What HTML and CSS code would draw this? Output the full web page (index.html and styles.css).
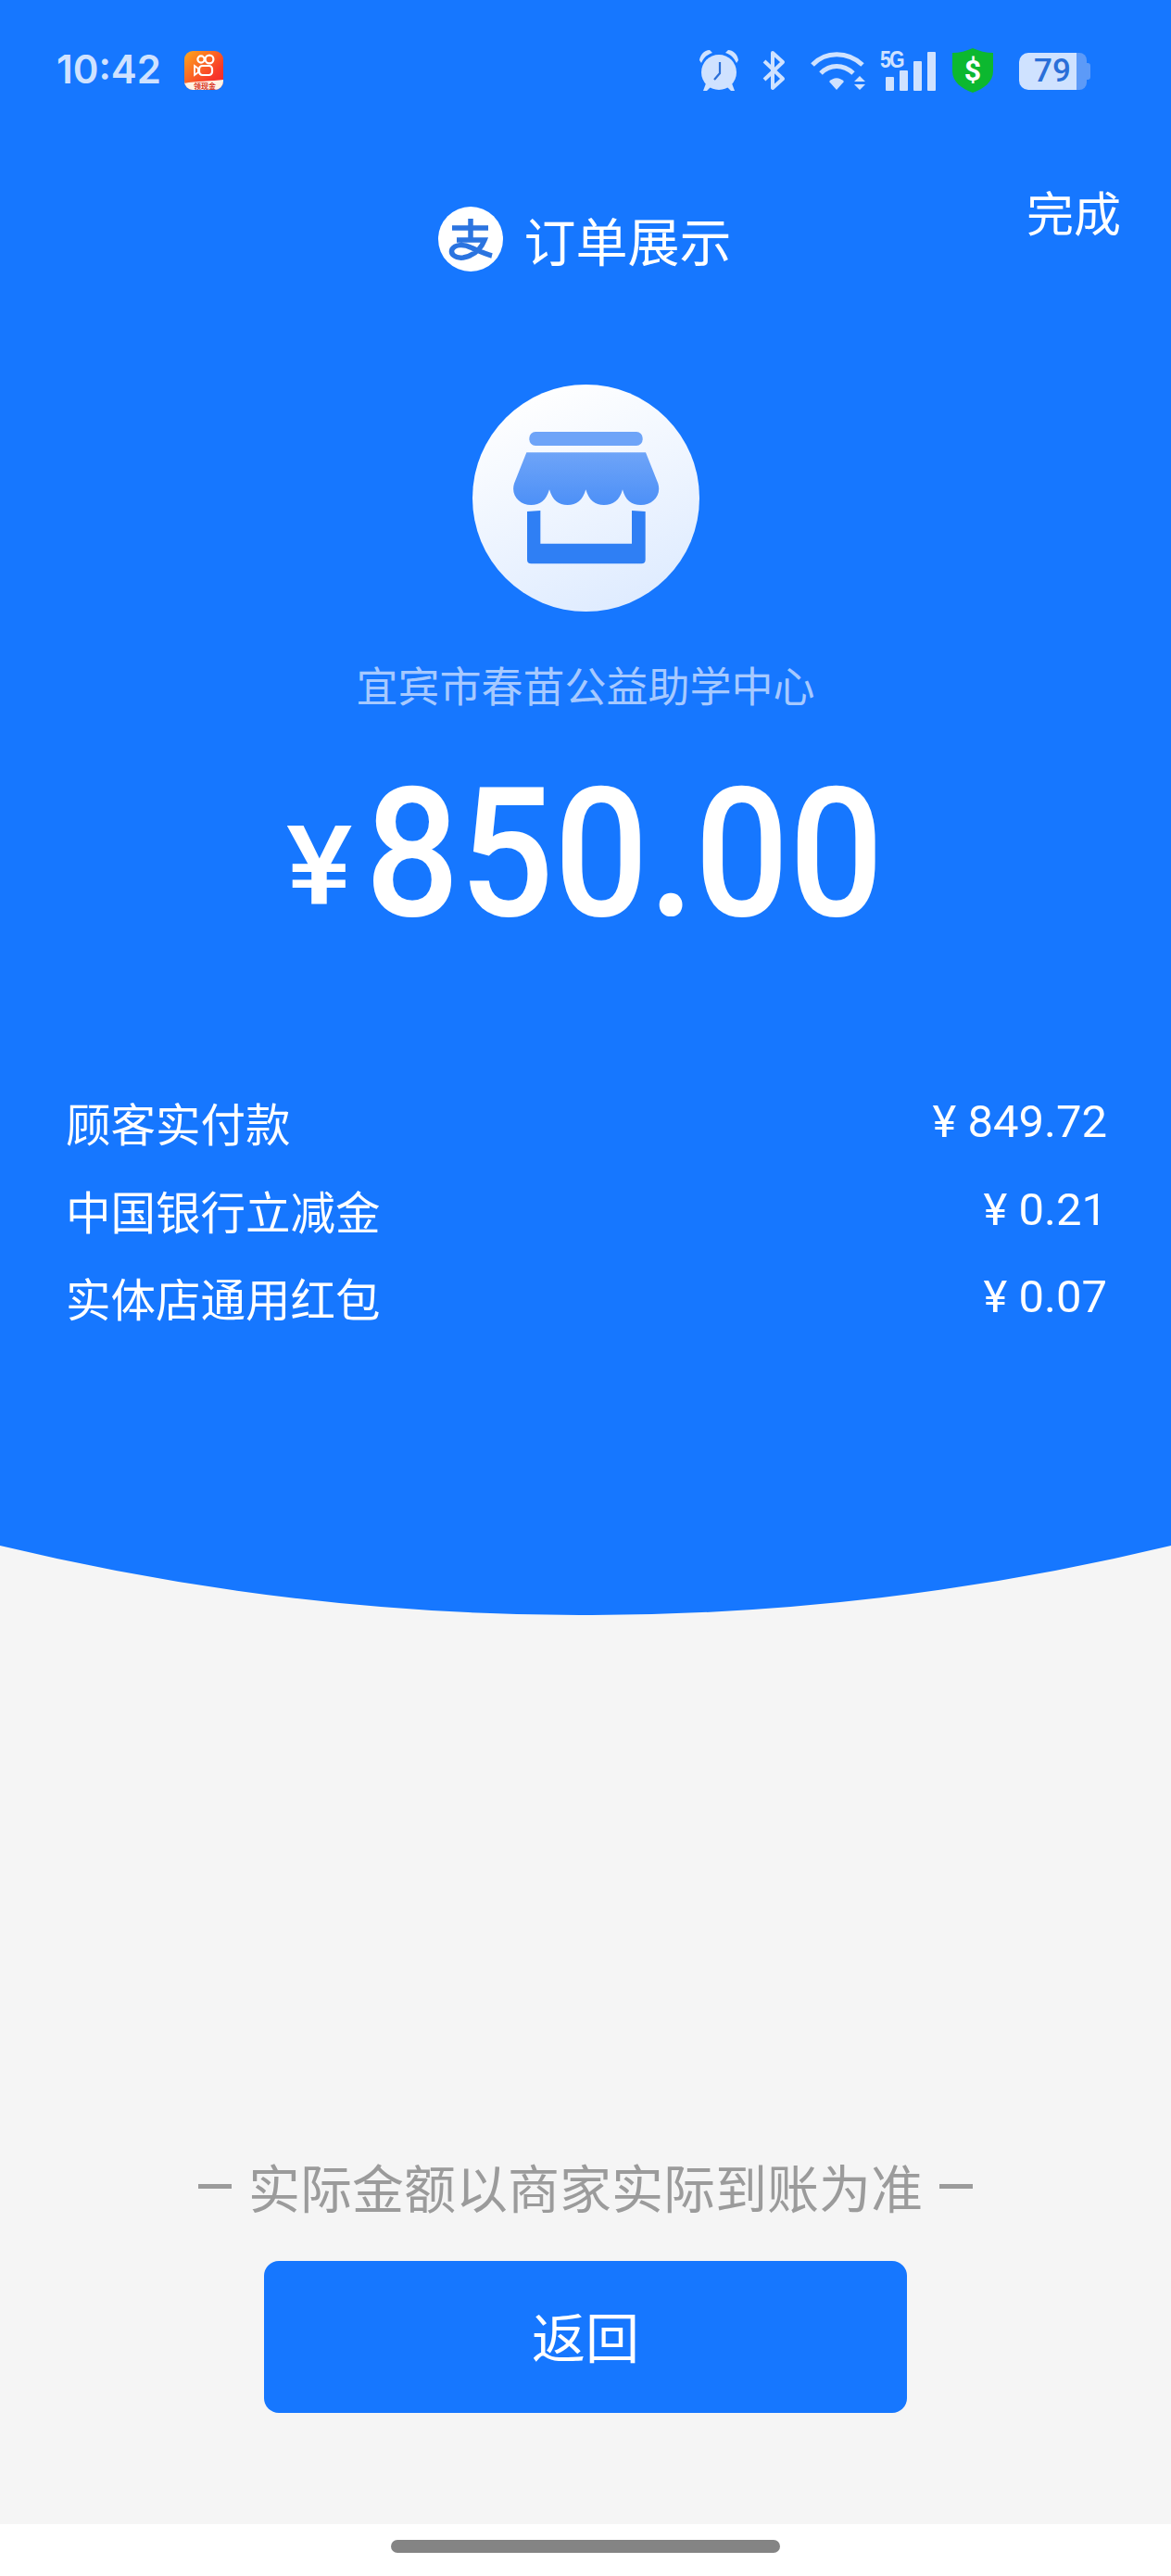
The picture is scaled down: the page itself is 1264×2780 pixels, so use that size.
FILE: index.html
```html
<!DOCTYPE html>
<html lang="zh-CN">
<head>
<meta charset="utf-8">
<title>订单展示</title>
<link rel="stylesheet" href="styles.css">
</head>
<body>
<div class="screen">
  <header class="hero">
    <div class="status">
      <div class="status-left">
        <span class="time">10:42</span>
        <svg class="app-icon" viewBox="0 0 42 42">
          <defs><linearGradient id="ks" x1="0" y1="0" x2="1" y2="1"><stop offset="0" stop-color="#ffa81c"/><stop offset=".7" stop-color="#f8382a"/><stop offset="1" stop-color="#f5202c"/></linearGradient></defs>
          <rect width="42" height="42" rx="9" fill="url(#ks)"/>
          <path d="M0 35C12 32 30 33 42 31V33A9 9 0 0 1 33 42H9A9 9 0 0 1 0 33Z" fill="#fff3e4"/>
          <circle cx="18" cy="9" r="3.6" fill="none" stroke="#fff" stroke-width="2.2"/>
          <circle cx="27" cy="9" r="4.4" fill="none" stroke="#fff" stroke-width="2.2"/>
          <rect x="16" y="16" width="14" height="10" rx="3.5" fill="none" stroke="#fff" stroke-width="2.2"/>
          <path d="M15 19L11 16V26L15 23Z" fill="none" stroke="#fff" stroke-width="1.8"/>
          <text class="app-label" x="22" y="41" text-anchor="middle">领现金</text>
        </svg>
      </div>
      <div class="status-right">
        <svg class="si-alarm" viewBox="0 0 44 45">
          <circle cx="22" cy="25" r="19" fill="#cfe2ff"/>
          <path d="M1 12C2 5 7 1 12 1L15 4C9 6 6 9 3 15ZM43 12C42 5 37 1 32 1L29 4C35 6 38 9 41 15Z" fill="#cfe2ff"/>
          <path d="M8 37L5 45H9L13 41ZM36 37L39 45H35L31 41Z" fill="#cfe2ff"/>
          <path d="M23 14V26L17 33" fill="none" stroke="#2a6fd8" stroke-width="2.2"/>
        </svg>
        <svg class="si-bt" viewBox="0 0 26 44">
          <path d="M3 12L23 31L12 41V3L23 13L3 32" fill="none" stroke="#cfe2ff" stroke-width="4" stroke-linejoin="round"/>
        </svg>
        <svg class="si-wifi" viewBox="0 0 60 42">
          <path d="M2 14C16 -1 40 -1 56 14" fill="none" stroke="#cfe2ff" stroke-width="5"/>
          <path d="M11 23C21 13 35 13 46 23" fill="none" stroke="#cfe2ff" stroke-width="5"/>
          <path d="M20 32C25 27 31 27 36 32L28 41Z" fill="#cfe2ff"/>
          <path d="M47 32L53 26L59 32ZM47 35H59L53 41Z" fill="#cfe2ff"/>
        </svg>
        <div class="si-signal">
          <span class="five-g">5G</span>
          <i class="bar b1"></i><i class="bar b2"></i><i class="bar b3"></i><i class="bar b4"></i>
        </div>
        <div class="si-shield">
          <svg class="shield-shape" viewBox="0 0 46 48">
            <path d="M23 0C30 3 37 5 45 5V25C45 36 35 44 23 48C11 44 1 36 1 25V5C9 5 16 3 23 0Z" fill="#0cb82f"/>
          </svg>
          <span class="dollar">$</span>
        </div>
        <div class="si-battery"><span class="bat-num">79</span></div>
      </div>
    </div>

    <div class="nav">
      <div class="nav-title">
        <svg class="alipay" viewBox="0 0 70 70">
          <circle cx="35" cy="35" r="35" fill="#fff"/>
          <path d="M15 23H54M35 13V36M20 36H50C46 46 38 53 27 55C18 56 13 51 15 46C18 41 27 40 35 44C42 47 50 51 58 53" fill="none" stroke="#2b74e0" stroke-width="5.5"/>
        </svg>
        <span class="nav-text">订单展示</span>
      </div>
      <span class="done">完成</span>
    </div>

    <div class="merchant">
      <svg class="store" viewBox="57 45 735 735">
        <defs>
          <linearGradient id="disc" x1="0.3" y1="0" x2="0.7" y2="1"><stop offset="0" stop-color="#ffffff"/><stop offset="1" stop-color="#deebff"/></linearGradient>
          <linearGradient id="awn" x1="0.5" y1="0" x2="0.5" y2="1"><stop offset="0" stop-color="#6ea4f8"/><stop offset="1" stop-color="#4d90f7"/></linearGradient>
        </defs>
        <circle cx="424.5" cy="412.5" r="367.5" fill="url(#disc)"/>
        <rect x="241" y="198" width="367" height="45" rx="20" fill="#6ea4f8"/>
        <path d="M232 265H618L658 365C670 405 640 435 602 435C572 435 552 420 543 385C534 420 512 435 483 435C454 435 434 420 424 385C414 420 394 435 365 435C336 435 316 420 306 385C296 420 276 435 247 435C210 435 180 405 192 365Z" fill="url(#awn)"/>
        <path d="M234 456L277 453V560H573V453L617 456V612Q617 625 604 625H247Q234 625 234 612Z" fill="#2f7ff4"/>
      </svg>
      <div class="merchant-name">宜宾市春苗公益助学中心</div>
      <div class="amount">
        <span class="yen">¥</span><span class="value">850.00</span>
      </div>
    </div>

    <ul class="rows">
      <li class="row"><span>顾客实付款</span><span class="num">¥ 849.72</span></li>
      <li class="row"><span>中国银行立减金</span><span class="num">¥ 0.21</span></li>
      <li class="row"><span>实体店通用红包</span><span class="num">¥ 0.07</span></li>
    </ul>
  </header>
  <svg class="curve" viewBox="0 0 1264 75" preserveAspectRatio="none">
    <path d="M0 0H1264A2700 2700 0 0 1 0 0Z" fill="#1677ff"/>
  </svg>

  <main class="body">
    <p class="note"><i class="dash"></i><span>实际金额以商家实际到账为准</span><i class="dash"></i></p>
    <button class="back">返回</button>
  </main>

  <footer class="home"><span class="home-bar"></span></footer>
</div>
</body>
</html>
```

FILE: styles.css
```css
* { box-sizing: border-box; }
html, body { margin: 0; padding: 0; }
body {
  width: 1264px;
  height: 2780px;
  background: #fff;
  font-family: "Noto Sans CJK SC", "Noto Sans", sans-serif;
  overflow: hidden;
}
.screen { display: flex; flex-direction: column; height: 2780px; background: #f5f5f5; }

.hero {
  height: 1668px;
  background: #1677ff;
  color: #fff;
  flex: none;
  display: flex;
  flex-direction: column;
}
.curve { display: block; width: 1264px; height: 75px; flex: none; }

.status {
  height: 150px;
  display: flex;
  justify-content: space-between;
  padding: 53px 91px 0 61px;
  flex: none;
}
.status-left { display: flex; align-items: flex-start; gap: 27px; }
.time {
  font: 600 42px/42px Inter, Roboto, sans-serif;
  color: #cfe2ff;
  width: 111px;
  margin-top: 1px;
}
.app-icon { width: 42px; height: 42px; margin-top: 2px; }
.app-label { font: 700 8px "Noto Sans CJK SC", sans-serif; fill: #d8341f; }
.status-right { display: flex; align-items: flex-start; height: 50px; }
.si-alarm { width: 44px; height: 45px; }
.si-bt { width: 26px; height: 44px; margin-left: 24px; margin-top: 1px; }
.si-wifi { width: 60px; height: 42px; margin-left: 27px; margin-top: 3px; }
.si-signal {
  position: relative;
  width: 60px;
  height: 44px;
  margin-left: 15px;
  margin-top: 1px;
  display: flex;
  align-items: flex-end;
  justify-content: flex-end;
  gap: 6px;
}
.five-g {
  position: absolute;
  left: 0;
  top: -3px;
  font: 700 25px/26px "Liberation Sans", sans-serif;
  letter-spacing: -2px;
  color: #cfe2ff;
  transform: scaleX(.85);
  transform-origin: left center;
}
.bar { display: block; width: 9px; background: #cfe2ff; border-radius: 1px; }
.b1 { height: 15px; }
.b2 { height: 22px; }
.b3 { height: 32px; }
.b4 { height: 42px; }
.si-shield {
  position: relative;
  width: 46px;
  height: 48px;
  margin-left: 17px;
  margin-top: -1px;
  display: flex;
  align-items: center;
  justify-content: center;
}
.shield-shape { position: absolute; inset: 0; width: 46px; height: 48px; }
.dollar { position: relative; font: 700 32px/48px Roboto, sans-serif; color: #fff; }
.si-battery {
  position: relative;
  width: 73px;
  height: 40px;
  margin-left: 27px;
  margin-top: 4px;
  border-radius: 10px 8px 8px 10px;
  background: linear-gradient(90deg, #cfe2ff 0 62px, #5c9af8 62px);
  display: flex;
  align-items: center;
  padding-left: 16px;
}
.si-battery::after {
  content: "";
  position: absolute;
  left: 73px;
  top: 11px;
  width: 4px;
  height: 18px;
  border-radius: 0 3px 3px 0;
  background: #5c9af8;
}
.bat-num { font: 500 35px/40px Roboto, sans-serif; color: #2a6fd8; width: 44px; }

.nav {
  position: relative;
  height: 70px;
  margin-top: 73px;
  flex: none;
  display: flex;
  justify-content: center;
}
.nav-title { display: flex; align-items: center; gap: 23px; margin-left: -2px; }
.alipay { width: 70px; height: 70px; }
.nav-text { font-size: 56px; line-height: 70px; font-weight: 400; }
.done {
  position: absolute;
  right: 54px;
  top: -30px;
  font-size: 51px;
  line-height: 70px;
}

.merchant { display: flex; flex-direction: column; align-items: center; margin-top: 122px; flex: none; }
.store { width: 245px; height: 245px; display: block; }
.merchant-name {
  margin-top: 47px;
  font-size: 45px;
  line-height: 64px;
  color: #a6c9ff;
}
.amount {
  align-self: stretch;
  display: flex;
  align-items: flex-end;
  margin-top: 56px;
  height: 190px;
  padding-left: 309px;
}
.yen {
  font: 500 118px/118px Roboto, sans-serif;
  width: 85px;
  margin-bottom: 23px;
  transform: scaleX(1.14);
  transform-origin: left center;
}
.value {
  font: 500 194px/190px Roboto, sans-serif;
  display: inline-block;
  transform: scaleX(.925);
  transform-origin: left center;
  white-space: nowrap;
}

.rows { list-style: none; margin: 147px 0 0; padding: 0 69px 0 71px; flex: none; }
.row {
  display: flex;
  justify-content: space-between;
  height: 94.5px;
  font-size: 48.5px;
  line-height: 94px;
}
.num { font: 400 49px/94px Roboto, sans-serif; }

.body {
  flex: 1;
  display: flex;
  flex-direction: column;
  align-items: center;
  justify-content: flex-end;
  padding-bottom: 120px;
}
.note {
  margin: 0 0 41px;
  display: flex;
  align-items: center;
  gap: 18px;
  color: #9b9b9b;
  font-size: 56px;
  line-height: 80px;
}
.dash { display: block; width: 36px; height: 5px; background: #9b9b9b; }
.back {
  width: 694px;
  height: 164px;
  border: 0;
  border-radius: 16px;
  background: #1677ff;
  color: #fff;
  font-family: inherit;
  font-size: 58px;
  line-height: 80px;
  padding: 0 0 4px;
}
.home {
  height: 56px;
  flex: none;
  background: #fff;
  display: flex;
  justify-content: center;
  padding-top: 17px;
}
.home-bar { width: 420px; height: 14px; border-radius: 7px; background: #848484; }
```
